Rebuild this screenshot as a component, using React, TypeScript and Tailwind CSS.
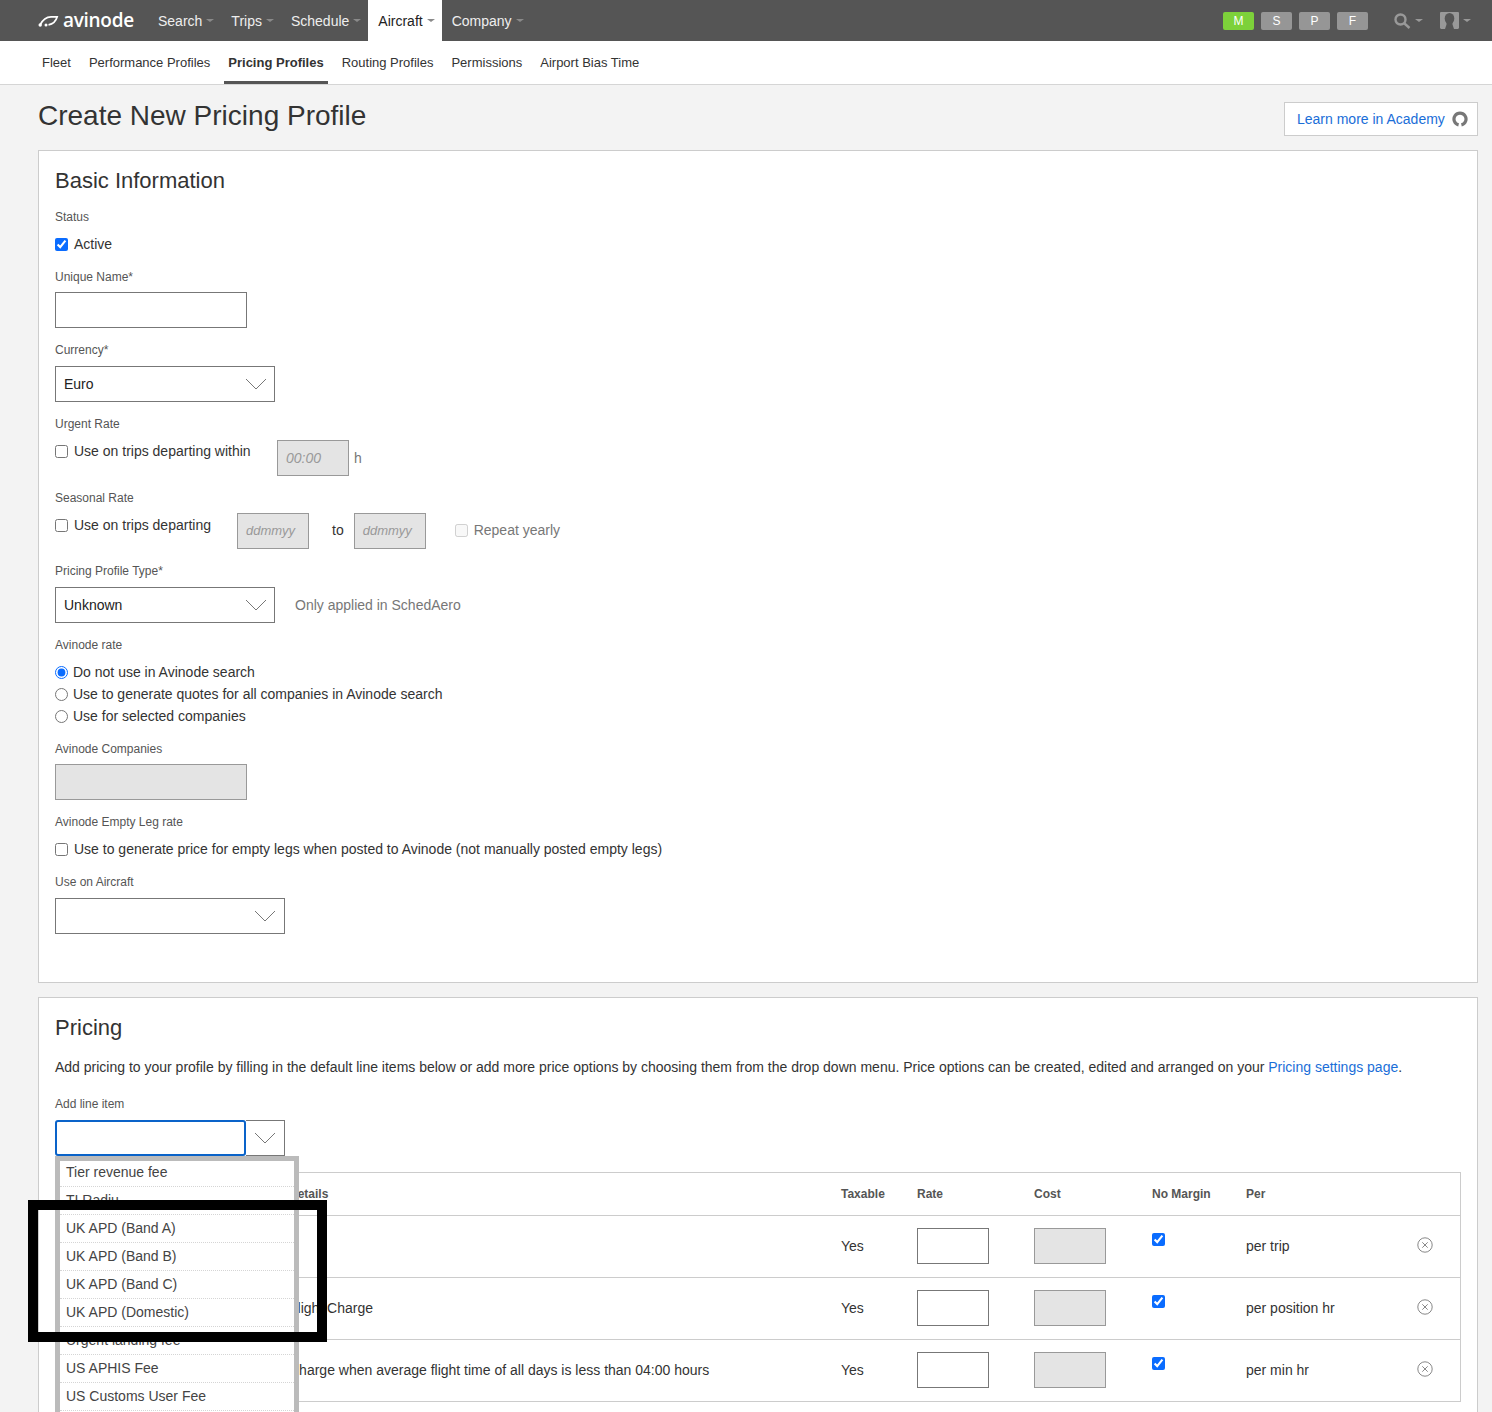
import { ReactNode } from 'react'

const font = { fontFamily: '"Liberation Sans", Arial, sans-serif' }

function Caret({ className = 'border-t-[#8a8a8a]' }: { className?: string }) {
  return (
    <span className={`ml-1 inline-block h-0 w-0 border-x-4 border-t-[3px] border-x-transparent ${className}`} />
  )
}

function Chevron() {
  return (
    <svg width="22" height="12" viewBox="0 0 22 12" fill="none" stroke="#777" strokeWidth="1">
      <path d="M1 1l10 10L21 1" />
    </svg>
  )
}

function Label({ children, className = '' }: { children: ReactNode; className?: string }) {
  return <div className={`text-xs leading-4 text-[#555] ${className}`}>{children}</div>
}

function Select({ className, value }: { className: string; value?: string }) {
  return (
    <div className={`flex h-9 items-center justify-between border border-[#777] bg-white pl-2 text-sm text-[#222] ${className}`}>
      <span>{value}</span>
      <Chevron />
    </div>
  )
}

function Disabled({ children, className = '' }: { children?: ReactNode; className?: string }) {
  return (
    <div className={`flex h-9 items-center border border-[#999] bg-[#e4e4e4] pl-2 text-sm italic text-[#999] ${className}`}>
      {children}
    </div>
  )
}

function Check({ label, checked }: { label: string; checked?: boolean }) {
  return (
    <label className="flex items-center gap-[6px] text-sm leading-5 text-[#333]">
      <input type="checkbox" defaultChecked={checked} className="h-[13px] w-[13px] accent-[#0a6cff]" />
      {label}
    </label>
  )
}

function Radio({ label, checked }: { label: string; checked?: boolean }) {
  return (
    <label className="flex h-[22px] items-center gap-[5px] text-sm text-[#333]">
      <input type="radio" name="avinode-rate" defaultChecked={checked} className="h-[13px] w-[13px] accent-[#0a6cff]" />
      {label}
    </label>
  )
}

const topNav = ['Search', 'Trips', 'Schedule', 'Aircraft', 'Company']
const subNav = ['Fleet', 'Performance Profiles', 'Pricing Profiles', 'Routing Profiles', 'Permissions', 'Airport Bias Time']
const dropdownItems = [
  'Tier revenue fee',
  'TI Radiu',
  'UK APD (Band A)',
  'UK APD (Band B)',
  'UK APD (Band C)',
  'UK APD (Domestic)',
  'Urgent landing fee',
  'US APHIS Fee',
  'US Customs User Fee',
]
const rows = [
  { details: '', per: 'per trip' },
  { details: 'Flight Charge', per: 'per position hr' },
  { details: 'Charge when average flight time of all days is less than 04:00 hours', per: 'per min hr' },
]

function TopBar() {
  return (
    <div className="flex h-[41px] items-stretch bg-[#555] text-sm">
      <div className="flex w-[148px] items-center pl-[38px]">
        <svg width="21" height="12" viewBox="0 0 21 12" fill="none" stroke="#fff">
          <path d="M2 10C4.500 5 8 1.800 13 1.800h6.200C18 6 15 9.200 10.500 9.800" strokeWidth="1.700" />
          <circle cx="2.200" cy="10" r="1.700" fill="#fff" strokeWidth="0" />
          <circle cx="8" cy="10" r="1.500" fill="#fff" strokeWidth="0" />
        </svg>
        <span className="ml-[4px] font-['Open_Sans',sans-serif] text-[19px] leading-none font-semibold tracking-[-0.3px] text-white">avinode</span>
      </div>
      {topNav.map((item) => (
        <div
          key={item}
          className={`flex items-center pl-[10px] pr-[7px] ${item === 'Aircraft' ? 'bg-white text-[#222]' : 'text-[#eee]'}`}
        >
          {item}
          <Caret />
        </div>
      ))}
      <div className="ml-auto flex items-center pr-[21px]">
        <div className="flex gap-[7px] text-xs text-white">
          {['M', 'S', 'P', 'F'].map((badge) => (
            <span
              key={badge}
              className={`flex h-[18px] w-[31px] items-center justify-center rounded-[2px] ${badge === 'M' ? 'bg-[#7dd13a]' : 'bg-[#969696]'}`}
            >
              {badge}
            </span>
          ))}
        </div>
        <div className="ml-[26px] flex items-center">
          <svg width="17" height="16" viewBox="0 0 17 16" fill="none" stroke="#999">
            <circle cx="6.500" cy="6.500" r="5" strokeWidth="2.400" />
            <path d="M10.500 10.500l5 4.500" strokeWidth="2.400" />
          </svg>
          <Caret className="border-t-[#999]" />
        </div>
        <div className="ml-[17px] flex items-center">
          <svg width="19" height="17" viewBox="0 0 19 17">
            <path fill="#999" d="M1 0h17a1 1 0 011 1v15l-1 1H1l-1-1V1a1 1 0 011-1z" />
            <ellipse cx="9.500" cy="6.500" rx="4.800" ry="5.500" fill="#555" />
            <path fill="#555" d="M6.500 9h6v3.500l1.500 4.500H5l1.500-4.500z" />
          </svg>
          <Caret className="border-t-[#999]" />
        </div>
      </div>
    </div>
  )
}

function SubNav() {
  return (
    <div className="flex h-11 gap-[18px] border-b border-[#d5d5d5] bg-white pl-[42px] text-[13px] text-[#333]">
      {subNav.map((item) => (
        <div key={item} className="relative flex items-center pt-[1px]">
          <span className={item === 'Pricing Profiles' ? 'font-bold' : ''}>{item}</span>
          {item === 'Pricing Profiles' && (
            <span className="absolute inset-x-[-4px] bottom-0 h-[3px] bg-[#555]" />
          )}
        </div>
      ))}
    </div>
  )
}

function BasicInformation() {
  return (
    <section className="h-[833px] border border-[#ccc] bg-white px-4 pt-4">
      <h2 className="text-[22px] leading-[28px] text-[#333]">Basic Information</h2>
      <Label className="mt-[14px]">Status</Label>
      <div className="mt-[9px]"><Check label="Active" checked /></div>
      <Label className="mt-[15px]">Unique Name*</Label>
      <div className="mt-[7px] h-9 w-[192px] border border-[#777]" />
      <Label className="mt-[14px]">Currency*</Label>
      <div className="mt-2"><Select className="w-[220px] pr-[7px]" value="Euro" /></div>
      <Label className="mt-[14px]">Urgent Rate</Label>
      <div className="mt-2 flex items-start">
        <div className="w-[222px] pt-[1px]"><Check label="Use on trips departing within" /></div>
        <Disabled className="w-[72px]">00:00</Disabled>
        <span className="ml-[5px] self-center text-sm text-[#777]">h</span>
      </div>
      <Label className="mt-[14px]">Seasonal Rate</Label>
      <div className="mt-[7px] flex items-start">
        <div className="w-[182px] pt-[2px]"><Check label="Use on trips departing" /></div>
        <Disabled className="w-[72px] text-[13px]">ddmmyy</Disabled>
        <span className="ml-[23px] self-center pb-[2px] text-sm text-[#333]">to</span>
        <Disabled className="ml-[10px] w-[72px] text-[13px]">ddmmyy</Disabled>
        <label className="ml-[29px] flex items-center gap-[6px] self-center pb-[2px] text-sm text-[#777]">
          <input type="checkbox" disabled className="h-[13px] w-[13px]" />
          Repeat yearly
        </label>
      </div>
      <Label className="mt-[14px]">Pricing Profile Type*</Label>
      <div className="mt-2 flex items-center">
        <Select className="w-[220px] pr-[7px]" value="Unknown" />
        <span className="ml-5 text-sm text-[#777]">Only applied in SchedAero</span>
      </div>
      <Label className="mt-[14px]">Avinode rate</Label>
      <div className="mt-2">
        <Radio label="Do not use in Avinode search" checked />
        <Radio label="Use to generate quotes for all companies in Avinode search" />
        <Radio label="Use for selected companies" />
      </div>
      <Label className="mt-[14px]">Avinode Companies</Label>
      <Disabled className="mt-[7px] w-[192px]" />
      <Label className="mt-[14px]">Avinode Empty Leg rate</Label>
      <div className="mt-[9px]"><Check label="Use to generate price for empty legs when posted to Avinode (not manually posted empty legs)" /></div>
      <Label className="mt-[15px]">Use on Aircraft</Label>
      <div className="mt-2"><Select className="w-[230px] pr-2" /></div>
    </section>
  )
}

function LineItemDropdown() {
  return (
    <div className="absolute left-0 top-9 z-10 h-[260px] w-[244px] overflow-hidden border-x-[5px] border-t-[5px] border-[#bbb] bg-white text-sm text-[#444]">
      <div className="-mt-[2px]">
        {dropdownItems.map((item) => (
          <div key={item} className="flex h-7 items-center border-b border-dotted border-[#d5d5d5] pb-[1px] pl-[6px]">
            {item}
          </div>
        ))}
      </div>
    </div>
  )
}

function RemoveIcon() {
  return (
    <svg className="mb-[2px]" width="16" height="16" viewBox="0 0 16 16" fill="none" stroke="#888">
      <circle cx="8" cy="8" r="7.200" />
      <path d="M5.300 5.300l5.400 5.400M10.700 5.300l-5.400 5.400" />
    </svg>
  )
}

function PriceTable() {
  return (
    <div className="mt-4 border border-b-0 border-[#ccc] text-sm text-[#333]">
      <div className="flex h-[43px] items-center border-b border-[#ccc] text-xs font-bold text-[#555]">
        <div className="w-[233px] shrink-0" />
        <div className="w-[552px] shrink-0">Details</div>
        <div className="w-[76px] shrink-0">Taxable</div>
        <div className="w-[117px] shrink-0">Rate</div>
        <div className="w-[118px] shrink-0">Cost</div>
        <div className="w-[94px] shrink-0">No Margin</div>
        <div>Per</div>
      </div>
      {rows.map((row) => (
        <div key={row.per} className="flex h-[62px] items-center border-b border-[#ccc] pb-[2px]">
          <div className="w-[233px] shrink-0" />
          <div className="w-[552px] shrink-0">{row.details}</div>
          <div className="w-[76px] shrink-0">Yes</div>
          <div className="w-[117px] shrink-0">
            <div className="h-9 w-[72px] border border-[#777]" />
          </div>
          <div className="w-[118px] shrink-0">
            <div className="h-9 w-[72px] border border-[#999] bg-[#e4e4e4]" />
          </div>
          <div className="w-[94px] shrink-0 self-start pt-[17px]">
            <input type="checkbox" defaultChecked className="block h-[13px] w-[13px] accent-[#0a6cff]" />
          </div>
          <div className="w-[171px] shrink-0">{row.per}</div>
          <RemoveIcon />
        </div>
      ))}
    </div>
  )
}

function Pricing() {
  return (
    <section className="mt-[14px] h-[600px] border border-[#ccc] bg-white px-4 pt-4">
      <h2 className="text-[22px] leading-[28px] text-[#333]">Pricing</h2>
      <p className="mt-[15px] text-sm leading-5 text-[#333]">
        Add pricing to your profile by filling in the default line items below or add more price options by choosing them from the drop down menu. Price options can be created, edited and arranged on your{' '}
        <span className="text-[#1a6ed8]">Pricing settings page</span>.
      </p>
      <Label className="mt-[19px]">Add line item</Label>
      <div className="relative mt-2 flex">
        <div className="h-9 w-[191px] rounded-[3px] border-2 border-[#0a63c9]" />
        <div className="flex h-9 w-[39px] items-center justify-center border border-l-0 border-[#777]"><Chevron /></div>
        <LineItemDropdown />
      </div>
      <PriceTable />
    </section>
  )
}

export default function App() {
  return (
    <div style={font} className="relative h-[1412px] overflow-hidden bg-[#f3f3f3]">
      <TopBar />
      <SubNav />
      <div className="px-[14px] pl-[38px]">
        <div className="flex h-[65px] items-center justify-between pb-[3px]">
          <h1 className="text-[28px] text-[#333]">Create New Pricing Profile</h1>
          <div className="mt-[6px] flex h-[34px] w-[194px] items-center border border-[#ccc] bg-white pl-3 text-sm text-[#1a6ed8]">
            Learn more in Academy
            <svg className="ml-[7px]" width="16" height="16" viewBox="0 0 16 16" fill="none" stroke="#777" strokeWidth="3.200">
              <path d="M6.600 13.900A6 6 0 119.400 13.900" />
            </svg>
          </div>
        </div>
        <BasicInformation />
        <Pricing />
      </div>
      {/* black frame sitting over the shot */}
      <div className="absolute left-[28px] top-[1200px] z-20 h-[142px] w-[299px] border-[10px] border-black" />
    </div>
  )
}
